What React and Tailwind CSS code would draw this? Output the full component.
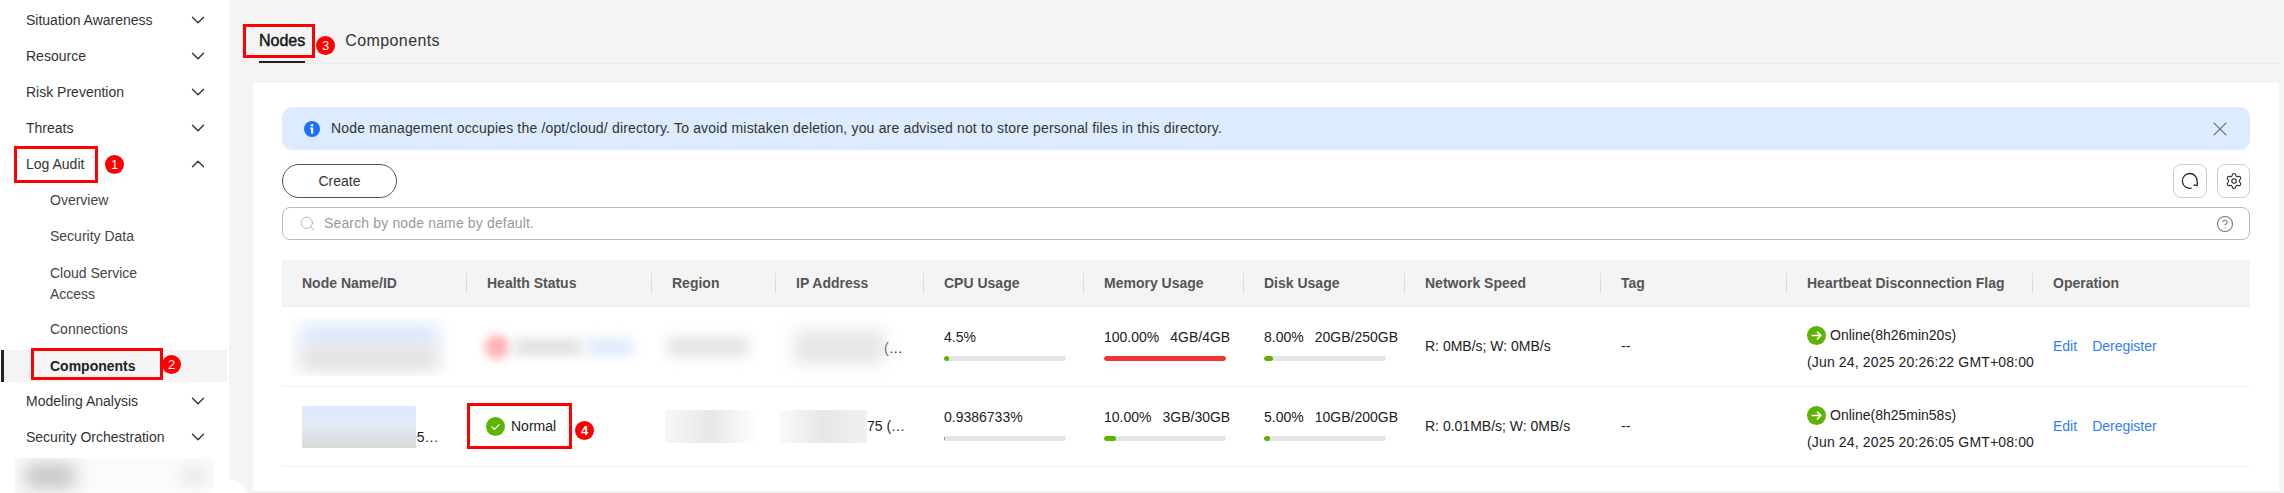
import React from "react";
import { ChevronDown, ChevronUp, CircleHelp, Search, Settings, X } from "lucide-react";

const gridCols =
  "grid grid-cols-[185px_185px_124px_148px_160px_160px_161px_196px_186px_246px_217px]";

const headers = [
  "Node Name/ID",
  "Health Status",
  "Region",
  "IP Address",
  "CPU Usage",
  "Memory Usage",
  "Disk Usage",
  "Network Speed",
  "Tag",
  "Heartbeat Disconnection Flag",
  "Operation",
];

function Badge({ n, className }) {
  return (
    <span
      className={`absolute z-20 flex size-[19px] items-center justify-center rounded-full bg-[#f00] text-[13px] text-white ${className}`}
    >
      {n}
    </span>
  );
}

function RedBox({ className }) {
  return <div className={`pointer-events-none absolute z-10 border-[3px] border-[#f00] ${className}`} />;
}

function MenuItem({ label, open, closed = true }) {
  return (
    <div className="flex h-[36px] items-center justify-between pl-[26px] pr-[20px] text-[#333]">
      <span>{label}</span>
      {closed && <ChevronDown size={22} strokeWidth={1.5} className="text-[#333]" />}
      {open && <ChevronUp size={22} strokeWidth={1.5} className="text-[#333]" />}
    </div>
  );
}

function SubItem({ children }) {
  return <div className="flex h-[36px] items-center pl-[50px] text-[#444]">{children}</div>;
}

function Sidebar() {
  return (
    <aside className="flex w-[229px] shrink-0 flex-col bg-white pt-[2px]">
      <MenuItem label="Situation Awareness" />
      <MenuItem label="Resource" />
      <MenuItem label="Risk Prevention" />
      <MenuItem label="Threats" />
      <div className="relative">
        <MenuItem label="Log Audit" open closed={false} />
        <RedBox className="left-[14px] top-0 h-[37px] w-[84px]" />
        <Badge n="1" className="left-[105px] top-[9px]" />
      </div>
      <SubItem>Overview</SubItem>
      <SubItem>Security Data</SubItem>
      <div className="flex h-[57px] items-center pl-[50px] pt-[3px] leading-[21px] text-[#444]">
        <span className="w-[110px]">Cloud Service Access</span>
      </div>
      <SubItem>Connections</SubItem>
      <div className="relative h-[36px] py-[3px]">
        <div className="ml-[1px] mr-[2px] flex h-[32px] items-center border-l-[3px] border-[#222] bg-[#f4f4f4] pl-[46px] font-bold text-[#222]">
          Components
        </div>
        <RedBox className="left-[31px] top-[1px] h-[32px] w-[132px]" />
        <Badge n="2" className="left-[162px] top-[8px]" />
      </div>
      <MenuItem label="Modeling Analysis" />
      <MenuItem label="Security Orchestration" />
      <div className="mx-[15px] mt-[3px] flex h-[35px] justify-between overflow-hidden bg-[#fbfbfb]">
        <div className="ml-[10px] mt-[6px] h-[24px] w-[50px] bg-[#c4c4c4] blur-[9px]" />
        <div className="mr-[8px] mt-[8px] h-[20px] w-[24px] bg-[#ececec] blur-[6px]" />
      </div>
    </aside>
  );
}

function InfoIcon() {
  return (
    <svg width="16" height="16" viewBox="0 0 16 16" className="shrink-0">
      <circle cx="8" cy="8" r="8" fill="#1f6fff" />
      <rect x="7" y="6.6" width="2.2" height="6" fill="#fff" />
      <rect x="6" y="6.6" width="2" height="1.2" fill="#fff" />
      <circle cx="8" cy="4.2" r="1.3" fill="#fff" />
    </svg>
  );
}

function CheckIcon() {
  return (
    <svg width="19" height="19" viewBox="0 0 19 19" className="shrink-0">
      <circle cx="9.5" cy="9.5" r="9.5" fill="#5cb300" />
      <path d="M5.6 9.6l2.8 2.8 5-5" fill="none" stroke="#fff" strokeWidth="1.3" />
    </svg>
  );
}

function OnlineIcon() {
  return (
    <svg width="19" height="19" viewBox="0 0 19 19" className="shrink-0">
      <circle cx="9.5" cy="9.5" r="9.5" fill="#5cb300" />
      <path d="M4.6 9.5h9M10 5.6l3.8 3.9-3.8 3.9" fill="none" stroke="#fff" strokeWidth="1.7" />
    </svg>
  );
}

function RefreshIcon() {
  return (
    <svg width="18" height="18" viewBox="0 0 18 18" fill="none" stroke="#222" strokeWidth="1.3">
      <path d="M16 10.4A7.4 7.4 0 1 0 10.8 16" />
      <path d="M12.6 13l3.4.6.6-3.4" />
    </svg>
  );
}

function Bar({ fill }) {
  return (
    <div className="mt-[9px] h-[5px] w-[122px] overflow-hidden rounded-full bg-[#e5e5e5]">
      <div className={`h-full rounded-full ${fill}`} />
    </div>
  );
}

function Usage({ pct, amount, fill }) {
  return (
    <div className="self-start pl-[20px] pt-[20px]">
      <div className="flex gap-[11px] whitespace-nowrap leading-[20px] text-[#222]">
        <span>{pct}</span>
        {amount && <span>{amount}</span>}
      </div>
      <Bar fill={fill} />
    </div>
  );
}

function Heartbeat({ online, time }) {
  return (
    <div className="self-start whitespace-nowrap pl-[20px] pt-[18px] leading-[20px] text-[#222]">
      <div className="flex items-center gap-[4px]">
        <OnlineIcon />
        <span>{online}</span>
      </div>
      <div className="mt-[7px] tracking-[0.15px]">{time}</div>
    </div>
  );
}

function Operation() {
  return (
    <div className="flex gap-[15px] pl-[20px] text-[#2b7fff]">
      <span>Edit</span>
      <span>Deregister</span>
    </div>
  );
}

function NodeTable() {
  return (
    <div>
      <div className={`${gridCols} h-[47px] items-center border-b border-[#eee] bg-[#f4f4f4]`}>
        {headers.map((h, i) => (
          <div
            key={h}
            className={`flex h-[20px] items-center whitespace-nowrap pl-[20px] font-bold text-[#555] ${
              i < 10 ? "border-r border-[#ddd]" : ""
            }`}
          >
            {h}
          </div>
        ))}
      </div>

      {/* first row, most cells redacted */}
      <div className={`${gridCols} h-[80px] items-center border-b border-[#eee]`}>
        <div className="ml-[7px] flex h-[58px] w-[160px] flex-col justify-center overflow-hidden">
          <div className="mx-[10px] h-[24px] bg-[#dbe6fc] blur-[9px]" />
          <div className="mx-[10px] h-[22px] bg-[#dedede] blur-[9px]" />
        </div>
        <div className="flex items-center gap-[6px] pl-[18px]">
          <div className="size-[24px] shrink-0 rounded-full bg-[#ffb0b0] blur-[5px]" />
          <div className="h-[16px] w-[66px] shrink-0 bg-[#dfdfdf] blur-[6px]" />
          <div className="h-[18px] w-[46px] shrink-0 bg-[#e0eafc] blur-[6px]" />
        </div>
        <div className="pl-[16px]">
          <div className="h-[18px] w-[80px] bg-[#e0e0e0] blur-[7px]" />
        </div>
        <div className="flex items-center pl-[18px] text-[#222]">
          <div className="h-[34px] w-[90px] bg-[#e6e6e6] blur-[8px]" />
          <span className="mt-[4px]">(…</span>
        </div>
        <Usage pct="4.5%" fill="w-[5px] bg-[#5cb300]" />
        <Usage pct="100.00%" amount="4GB/4GB" fill="w-full bg-[#f63333]" />
        <Usage pct="8.00%" amount="20GB/250GB" fill="w-[9px] bg-[#5cb300]" />
        <div className="pl-[20px] text-[#222]">R: 0MB/s; W: 0MB/s</div>
        <div className="pl-[20px] text-[#222]">--</div>
        <Heartbeat online="Online(8h26min20s)" time="(Jun 24, 2025 20:26:22 GMT+08:00" />
        <Operation />
      </div>

      {/* second row */}
      <div className={`${gridCols} h-[80px] items-center border-b border-[#eee]`}>
        <div className="flex items-center pl-[20px] text-[#222]">
          <div className="relative z-10 h-[42px] w-[114px] bg-gradient-to-b from-[#dfe9fd] via-[#e4e9f2] to-[#d8d8d8]" />
          <span className="-ml-[7px] mt-[22px]">e5…</span>
        </div>
        <div className="relative flex h-full items-center gap-[6px] pl-[19px] text-[#222]">
          <CheckIcon />
          <span>Normal</span>
          <RedBox className="left-0 top-[16px] h-[46px] w-[105px]" />
          <Badge n="4" className="left-[108px] top-[34px] font-bold" />
        </div>
        <div className="ml-[13px] h-[33px] w-[92px] bg-gradient-to-r from-[#f7f7f7] via-[#e7e7e7] to-white" />
        <div className="flex items-center pl-[3px] text-[#222]">
          <div className="h-[33px] w-[88px] bg-gradient-to-r from-[#fafafa] via-[#e7e7e7] to-[#f0f0f0]" />
          <span>75 (…</span>
        </div>
        <Usage pct="0.9386733%" fill="w-[1px] bg-[#5cb300]" />
        <Usage pct="10.00%" amount="3GB/30GB" fill="w-[12px] bg-[#5cb300]" />
        <Usage pct="5.00%" amount="10GB/200GB" fill="w-[6px] bg-[#5cb300]" />
        <div className="pl-[20px] text-[#222]">R: 0.01MB/s; W: 0MB/s</div>
        <div className="pl-[20px] text-[#222]">--</div>
        <Heartbeat online="Online(8h25min58s)" time="(Jun 24, 2025 20:26:05 GMT+08:00" />
        <Operation />
      </div>
    </div>
  );
}

export default function App() {
  return (
    <div className="relative flex h-[493px] w-[2284px] overflow-hidden bg-[#f4f4f4] font-['Liberation_Sans',Arial,sans-serif] text-[14px]">
      <Sidebar />

      <main className="ml-[24px] w-[2026px] shrink-0">
        {/* Tabs */}
        <div className="relative flex h-[64px] gap-[40px] border-b border-[#ececec] pl-[6px] text-[16px]">
          <div className="h-full border-b-[2px] border-[#222] pt-[29px] text-[#111] [-webkit-text-stroke:0.4px]">
            Nodes
          </div>
          <div className="h-full pt-[29px] tracking-[0.4px] text-[#333]">Components</div>
          <RedBox className="-left-[10px] top-[24px] h-[34px] w-[72px]" />
          <Badge n="3" className="left-[63px] top-[36px]" />
        </div>

        {/* Card */}
        <div className="mt-[19px] h-[409px] border-b border-[#eee] bg-white px-[29px] pt-[24px]">
          <div className="flex h-[43px] items-center justify-between rounded-[10px] bg-[#dcebfd] pl-[22px] pr-[18px]">
            <div className="flex items-center gap-[11px] text-[#333]">
              <InfoIcon />
              <span className="tracking-[0.17px]">
                Node management occupies the /opt/cloud/ directory. To avoid mistaken deletion, you are advised not to store personal files in this directory.
              </span>
            </div>
            <X size={24} strokeWidth={1.1} className="text-[#777]" />
          </div>

          <div className="mt-[14px] flex h-[34px] items-center justify-between">
            <button className="h-[34px] w-[115px] rounded-full border border-[#555] text-[#333]">Create</button>
            <div className="flex gap-[10px]">
              <button className="flex size-[34px] items-center justify-center rounded-[8px] border border-[#ccc]">
                <RefreshIcon />
              </button>
              <button className="flex h-[34px] w-[33px] items-center justify-center rounded-[8px] border border-[#ccc]">
                <Settings size={18} strokeWidth={1.4} className="text-[#222]" />
              </button>
            </div>
          </div>

          <div className="mt-[9px] flex h-[33px] items-center justify-between rounded-[8px] border border-[#bbb] pl-[16px] pr-[15px] text-[#999]">
            <div className="flex items-center gap-[8px]">
              <Search size={17} strokeWidth={1.2} className="text-[#aaa]" />
              <span className="tracking-[0.15px]">Search by node name by default.</span>
            </div>
            <CircleHelp size={18} strokeWidth={1.4} className="text-[#777]" />
          </div>

          <div className="mt-[20px]">
            <NodeTable />
          </div>
        </div>
      </main>

      <div className="absolute left-[209px] top-[480px] size-[40px] rounded-full bg-white" />
    </div>
  );
}
